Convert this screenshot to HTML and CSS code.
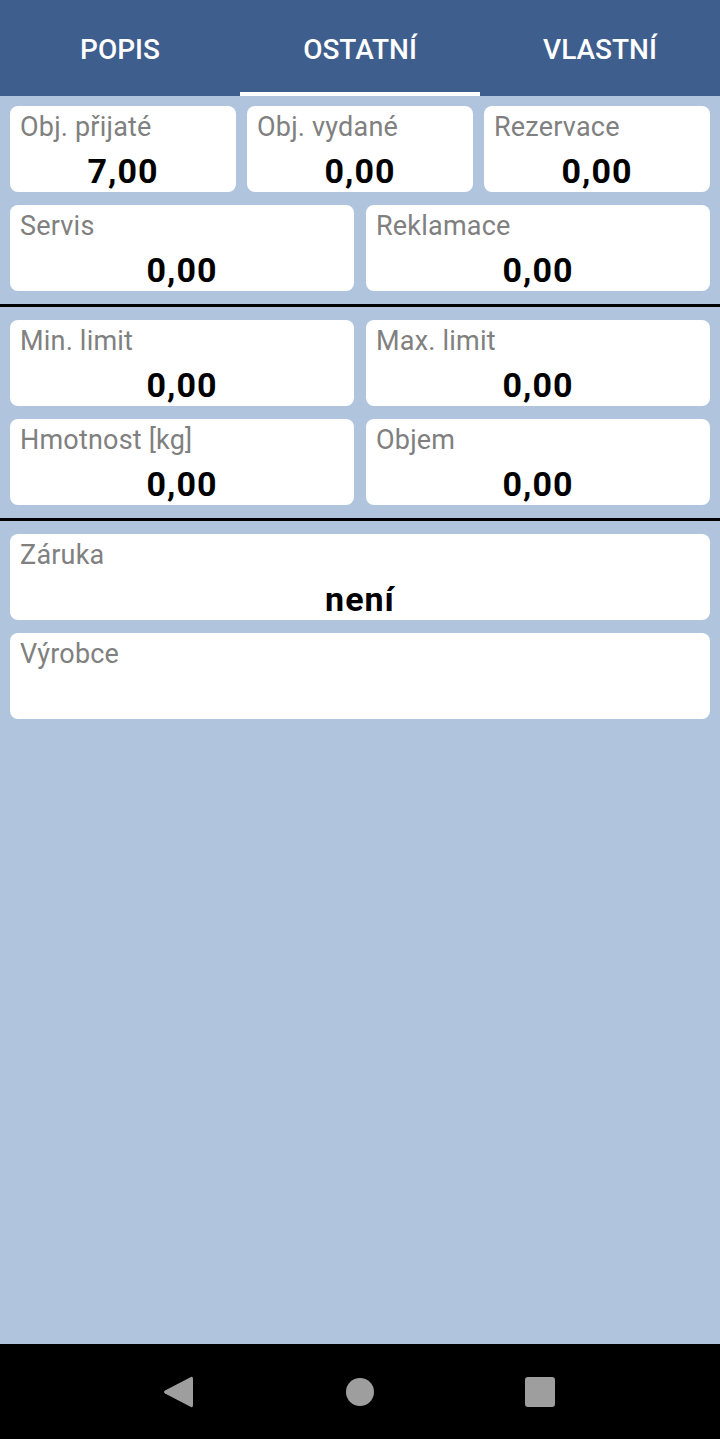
FILE: index.html
```html
<!DOCTYPE html>
<html lang="cs">
<head>
    <meta charset="UTF-8">
    <title>Karta zboží - Ostatní</title>
    <link rel="stylesheet" href="styles.css">
</head>
<body>
    <div class="screen">
        <nav class="tabs">
            <div class="tab">POPIS</div>
            <div class="tab active">OSTATNÍ</div>
            <div class="tab">VLASTNÍ</div>
        </nav>

        <main class="content">
            <div class="row row-3">
                <div class="field">
                    <div class="label">Obj. přijaté</div>
                    <div class="value">7,00</div>
                </div>
                <div class="field">
                    <div class="label">Obj. vydané</div>
                    <div class="value">0,00</div>
                </div>
                <div class="field">
                    <div class="label">Rezervace</div>
                    <div class="value">0,00</div>
                </div>
            </div>
            <div class="row row-2">
                <div class="field">
                    <div class="label">Servis</div>
                    <div class="value">0,00</div>
                </div>
                <div class="field">
                    <div class="label">Reklamace</div>
                    <div class="value">0,00</div>
                </div>
            </div>

            <hr class="divider">

            <div class="row row-2">
                <div class="field">
                    <div class="label">Min. limit</div>
                    <div class="value">0,00</div>
                </div>
                <div class="field">
                    <div class="label">Max. limit</div>
                    <div class="value">0,00</div>
                </div>
            </div>
            <div class="row row-2">
                <div class="field">
                    <div class="label">Hmotnost [kg]</div>
                    <div class="value">0,00</div>
                </div>
                <div class="field">
                    <div class="label">Objem</div>
                    <div class="value">0,00</div>
                </div>
            </div>

            <hr class="divider">

            <div class="row">
                <div class="field">
                    <div class="label">Záruka</div>
                    <div class="value">není</div>
                </div>
            </div>
            <div class="row">
                <div class="field">
                    <div class="label">Výrobce</div>
                    <div class="value"></div>
                </div>
            </div>
        </main>

        <footer class="navbar">
            <svg class="nav-icon" width="32" height="34" viewBox="0 0 32 34">
                <path d="M29 2 Q31 1 31 4 L31 30 Q31 33 29 32 L3 18.5 Q1 17 3 15.5 Z" fill="#9e9e9e"/>
            </svg>
            <span class="nav-home"></span>
            <span class="nav-recent"></span>
        </footer>
    </div>
</body>
</html>
```

FILE: styles.css
```css
body {
    margin: 0;
    padding: 0;
    font-family: Roboto, "Noto Sans", sans-serif;
    background: #b0c4de;
}
.screen {
    height: 1439px;
    display: flex;
    flex-direction: column;
}
.tabs {
    display: flex;
    height: 96px;
    background: #3e5e8d;
}
.tab {
    flex: 1;
    display: flex;
    align-items: center;
    justify-content: center;
    color: #fff;
    font-size: 28px;
    font-weight: 500;
    padding-top: 6px;
    border-bottom: 4px solid transparent;
    box-sizing: border-box;
}
.tab.active {
    border-bottom-color: #fff;
}
.content {
    flex: 1;
    padding: 10px 10px 0;
    display: flex;
    flex-direction: column;
    gap: 13px;
}
.row {
    display: grid;
    grid-template-columns: 1fr;
    gap: 12px;
}
.row-2 {
    grid-template-columns: 1fr 1fr;
}
.row-3 {
    grid-template-columns: 1fr 1fr 1fr;
    gap: 11px;
}
.field {
    background: #fff;
    border-radius: 8px;
    height: 86px;
    padding: 4px 10px 0;
    box-sizing: border-box;
}
.label {
    color: #808080;
    font-size: 27px;
    letter-spacing: 0.2px;
    line-height: 35px;
}
.value {
    color: #000;
    font-size: 34px;
    font-weight: bold;
    letter-spacing: 1px;
    text-align: center;
    line-height: 42px;
    margin-top: 5px;
}
.divider {
    border: none;
    height: 3px;
    background: #000;
    margin: 0 -10px;
}
.navbar {
    height: 95px;
    background: #000;
    display: flex;
    align-items: center;
    justify-content: space-between;
    padding: 0 165px 0 162px;
}
.nav-home {
    width: 28px;
    height: 28px;
    border-radius: 50%;
    background: #9e9e9e;
}
.nav-recent {
    width: 30px;
    height: 30px;
    border-radius: 3px;
    background: #9e9e9e;
}
```
